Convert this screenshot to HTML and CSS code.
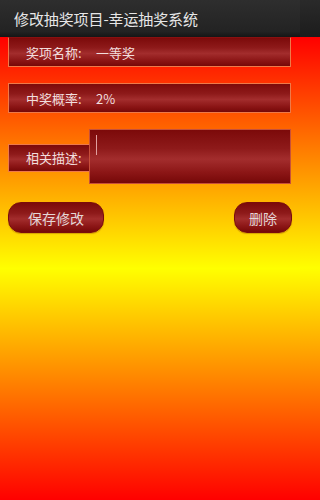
FILE: index.html
```html
<!DOCTYPE html>
<html lang="zh-CN">
<head>
<meta charset="utf-8">
<title>修改抽奖项目</title>
<link rel="stylesheet" href="styles.css">
</head>
<body>
<div class="app">
  <header class="titlebar">修改抽奖项目-幸运抽奖系统</header>
  <main class="content">
    <div class="field field-first">
      <span class="label">奖项名称:</span>
      <span class="value">一等奖</span>
    </div>
    <div class="field">
      <span class="label">中奖概率:</span>
      <span class="value">2%</span>
    </div>
    <div class="desc-row">
      <div class="desc-label">相关描述:</div>
      <div class="desc-input"><span class="caret"></span></div>
    </div>
    <div class="actions">
      <button class="btn btn-save">保存修改</button>
      <button class="btn btn-delete">删除</button>
    </div>
  </main>
</div>
</body>
</html>
```
FILE: styles.css
```css
html {
  background:
    linear-gradient(#2a2a2a, #1c1c1c) 0 0 / 100% 37px no-repeat,
    linear-gradient(#ff0000 37px, #ffff00 268px, #ff0000 500px) 0 0 / 100% 500px no-repeat;
}
html, body {
  margin: 0;
  padding: 0;
}
body {
  width: 300px;
  height: 500px;
  overflow: hidden;
  font-family: "Noto Sans CJK SC", "Noto Sans", sans-serif;
}
.app {
  display: flex;
  flex-direction: column;
  width: 300px;
  height: 500px;
}
.titlebar {
  height: 37px;
  flex-shrink: 0;
  box-sizing: border-box;
  background: linear-gradient(#2e2e2e, #232323 85%, #151515);
  color: #e6e6e6;
  font-size: 15px;
  line-height: 37px;
  padding-left: 14px;
  letter-spacing: -0.1px;
}
.content {
  flex: 1;
  background: linear-gradient(#ff0000 0%, #ffff00 50%, #ff0000 100%);
  padding: 0 9px 0 8px;
  display: flex;
  flex-direction: column;
}
.field, .desc-label, .desc-input, .btn {
  background: linear-gradient(#7c0a0a 0%, #8e1a1a 35%, #a32d2d 55%, #8c1616 80%, #760808 100%);
}
.field {
  height: 30px;
  box-sizing: border-box;
  border: 1px solid #ee7a4a;
  display: flex;
  align-items: center;
  padding-left: 17px;
  color: #f2dede;
  font-size: 13px;
  margin-top: 16px;
}
.field-first {
  margin-top: 0;
  border-top-color: #8a1010;
}
.label {
  width: 70px;
  flex-shrink: 0;
}
.desc-row {
  display: flex;
  align-items: center;
  margin-top: 16px;
}
.desc-label {
  width: 81px;
  height: 28px;
  box-sizing: border-box;
  border: 1px solid #ee7a4a;
  border-right: none;
  padding-left: 17px;
  color: #f2dede;
  font-size: 13px;
  line-height: 26px;
  margin-top: 2px;
}
.desc-input {
  flex: 1;
  height: 55px;
  box-sizing: border-box;
  border: 1px solid #c8503a;
  padding: 5px 0 0 6px;
}
.caret {
  display: block;
  width: 1px;
  height: 20px;
  background: #e0a0a0;
}
.actions {
  display: flex;
  justify-content: space-between;
  margin-top: 18px;
  margin-right: -1px;
}
.btn {
  height: 31px;
  border: 1px solid #7a0c0c;
  border-radius: 13px;
  color: #e4d6d6;
  font-family: "Noto Sans CJK SC", "Noto Sans", sans-serif;
  font-size: 14px;
  padding: 0;
  box-shadow: 0 1px 1px rgba(120, 40, 0, 0.3);
}
.btn-save {
  width: 96px;
}
.btn-delete {
  width: 58px;
}
```
